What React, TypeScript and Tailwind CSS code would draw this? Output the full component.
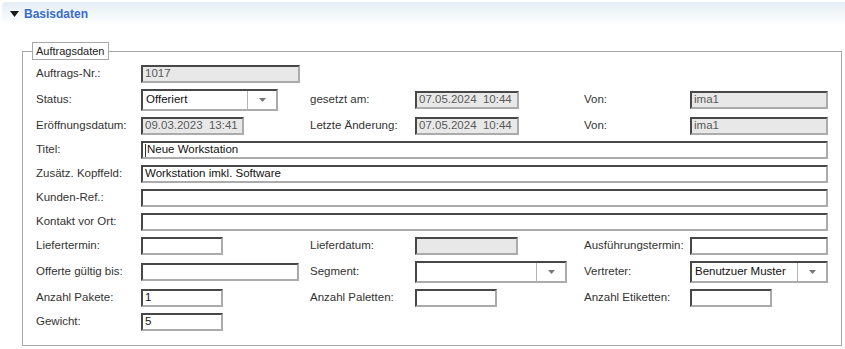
import React from 'react';

type FieldProps = {
  w: string;
  value?: string;
  readOnly?: boolean;
  caret?: boolean;
};

const Field: React.FC<FieldProps> = ({ w, value, readOnly, caret }) => (
  <div
    className={`${w} h-[18px] flex items-center pl-[2px] border-2 border-t-[#474747] border-l-[#474747] border-b-[#ababab] border-r-[#ababab] ${
      readOnly ? 'bg-[#e8e8e8] text-[#5a5a5a]' : 'bg-white text-[#111111]'
    }`}
  >
    {caret && <span className="w-px h-[13px] bg-[#333333] mr-[1px]" />}
    <span className="leading-none whitespace-pre">{value}</span>
  </div>
);

const Select: React.FC<{ w: string; value?: string }> = ({ w, value }) => (
  <div className={`${w} h-[22px] flex border-2 border-t-[#474747] border-l-[#474747] border-b-[#ababab] border-r-[#ababab] bg-white`}>
    <div className="flex-1 flex items-center pl-[3px] text-[#111111] whitespace-nowrap">{value}</div>
    <div className="w-[29px] border-l border-[#b4b4b4] flex items-center justify-center">
      <svg width="7" height="4" viewBox="0 0 7 4">
        <path d="M0 0 L7 0 L3.5 4 Z" fill="#777777" />
      </svg>
    </div>
  </div>
);

const Label: React.FC<{ children: React.ReactNode }> = ({ children }) => (
  <div className="text-[#333333] whitespace-nowrap">{children}</div>
);

const Row: React.FC<{ children: React.ReactNode }> = ({ children }) => (
  <div className="grid grid-cols-[105px_169px_105px_169px_106px_138px] items-center">{children}</div>
);

export default function App() {
  return (
    <div className="w-[845px] h-[349px] bg-white font-['Liberation_Sans',Arial,sans-serif] text-[11.5px]">
      <div className="ml-[2px] mt-[2px] h-[23px] rounded-tl-[4px] bg-gradient-to-b from-[#e3eef5] to-white flex items-center">
        <svg width="9" height="6" viewBox="0 0 9 6" className="ml-[8px]">
          <path d="M0 0 L9 0 L4.5 6 Z" fill="#1a1a1a" />
        </svg>
        <span className="ml-[5px] font-bold text-[12px] text-[#3a6cc4]">Basisdaten</span>
      </div>

      <fieldset className="ml-[22px] mr-[3px] mt-[17px] border border-[#a8a8a8] px-[13px] pt-[5px] pb-[14px]">
        <legend className="-ml-[4px] border border-[#a8a8a8] px-[3px] h-[18px] text-[11px] leading-[16px] text-[#222222] bg-white">
          Auftragsdaten
        </legend>
        <div className="flex flex-col gap-[6px]">
          <Row>
            <Label>Auftrags-Nr.:</Label>
            <Field w="w-[159px]" value="1017" readOnly />
          </Row>
          <Row>
            <Label>Status:</Label>
            <Select w="w-[137px]" value="Offeriert" />
            <Label>gesetzt am:</Label>
            <Field w="w-[104px]" value="07.05.2024  10:44" readOnly />
            <Label>Von:</Label>
            <Field w="w-[138px]" value="ima1" readOnly />
          </Row>
          <Row>
            <Label>Eröffnungsdatum:</Label>
            <Field w="w-[103px]" value="09.03.2023  13:41" readOnly />
            <Label>Letzte Änderung:</Label>
            <Field w="w-[104px]" value="07.05.2024  10:44" readOnly />
            <Label>Von:</Label>
            <Field w="w-[138px]" value="ima1" readOnly />
          </Row>
          <Row>
            <Label>Titel:</Label>
            <div className="col-span-5">
              <Field w="w-full" value="Neue Workstation" caret />
            </div>
          </Row>
          <Row>
            <Label>Zusätz. Kopffeld:</Label>
            <div className="col-span-5">
              <Field w="w-full" value="Workstation imkl. Software" />
            </div>
          </Row>
          <Row>
            <Label>Kunden-Ref.:</Label>
            <div className="col-span-5">
              <Field w="w-full" />
            </div>
          </Row>
          <Row>
            <Label>Kontakt vor Ort:</Label>
            <div className="col-span-5">
              <Field w="w-full" />
            </div>
          </Row>
          <Row>
            <Label>Liefertermin:</Label>
            <Field w="w-[82px]" />
            <Label>Lieferdatum:</Label>
            <Field w="w-[103px]" readOnly />
            <Label>Ausführungstermin:</Label>
            <Field w="w-[138px]" />
          </Row>
          <Row>
            <Label>Offerte gültig bis:</Label>
            <Field w="w-[158px]" />
            <Label>Segment:</Label>
            <Select w="w-[152px]" />
            <Label>Vertreter:</Label>
            <Select w="w-[138px]" value="Benutzuer Muster" />
          </Row>
          <Row>
            <Label>Anzahl Pakete:</Label>
            <Field w="w-[82px]" value="1" />
            <Label>Anzahl Paletten:</Label>
            <Field w="w-[82px]" />
            <Label>Anzahl Etiketten:</Label>
            <Field w="w-[82px]" />
          </Row>
          <Row>
            <Label>Gewicht:</Label>
            <Field w="w-[82px]" value="5" />
          </Row>
        </div>
      </fieldset>
    </div>
  );
}
